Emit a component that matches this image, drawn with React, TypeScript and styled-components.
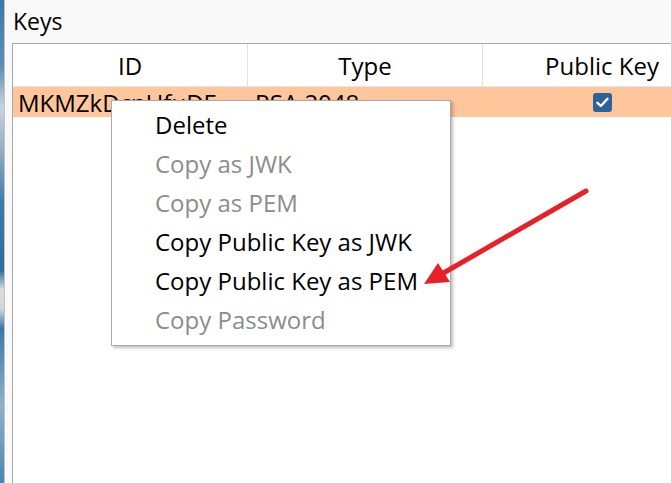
import React from "react";
import styled, { createGlobalStyle } from "styled-components";

const Global = createGlobalStyle`
  html, body { margin: 0; padding: 0; background: #f9f9f9; overflow: hidden; }
  body { font-family: "Open Sans", "Noto Sans", sans-serif; }
`;

const Screen = styled.div`
  position: relative;
  display: flex;
  width: 671px;
  height: 483px;
  overflow: hidden;
`;

const Desktop = styled.div`
  width: 4px;
  flex: none;
  background: linear-gradient(
    180deg,
    #3b78a8 0%,
    #5f8fb5 14%,
    #c9d3dc 22%,
    #9bb3c6 30%,
    #3e7aa8 42%,
    #2f6c9e 56%,
    #d9dde0 60%,
    #cfd6dc 64%,
    #3c77a6 68%,
    #8fb0c9 84%,
    #4b84b0 100%
  );
`;

const WindowEdge = styled.div`
  width: 1px;
  flex: none;
  background: #c4c4c4;
`;

const Window = styled.div`
  flex: 1;
  display: flex;
  flex-direction: column;
  background: #f9f9f9;
  min-width: 0;
`;

const Title = styled.div`
  height: 43px;
  padding-left: 8px;
  font-size: 23px;
  line-height: 42px;
  color: #000;
  box-sizing: border-box;
`;

const Table = styled.div`
  flex: 1;
  margin-left: 7px;
  width: 740px;
  border-top: 1px solid #a8a8a8;
  border-left: 1px solid #a8a8a8;
  background: #fff;
`;

const HeaderRow = styled.div`
  display: grid;
  grid-template-columns: 235px 235px 238px;
  height: 42px;
  border-bottom: 1px solid #e6e6e6;
`;

const HeaderCell = styled.div<{ $last?: boolean }>`
  display: flex;
  align-items: center;
  justify-content: center;
  font-size: 24px;
  color: #000;
  border-right: ${(p) => (p.$last ? "none" : "1px solid #e3e3e3")};
`;

const DataRow = styled.div`
  display: grid;
  grid-template-columns: 235px 235px 238px;
  height: 30px;
  background: #ffc69c;
`;

const Cell = styled.div<{ $center?: boolean; $pad?: number }>`
  display: flex;
  align-items: center;
  justify-content: ${(p) => (p.$center ? "center" : "flex-start")};
  padding-left: ${(p) => p.$pad ?? 0}px;
  font-size: 24px;
  color: #000;
  white-space: nowrap;
  overflow: hidden;
`;

const Check = styled.div`
  width: 19px;
  height: 19px;
  border-radius: 3px;
  background: #2b629b;
  display: flex;
  align-items: center;
  justify-content: center;
`;

const Menu = styled.div`
  position: absolute;
  left: 111px;
  top: 100px;
  width: 338px;
  padding: 4px 0 6px;
  background: #fff;
  border: 1px solid #a9a9a9;
  box-shadow: 2px 2px 3px rgba(0, 0, 0, 0.25);
`;

const MenuItem = styled.div<{ $disabled?: boolean }>`
  height: 39px;
  display: flex;
  align-items: center;
  padding-left: 43px;
  font-size: 24px;
  color: ${(p) => (p.$disabled ? "#8c8c8c" : "#000")};
  white-space: nowrap;
`;

const Arrow = styled.svg`
  position: absolute;
  left: 0;
  top: 0;
  pointer-events: none;
`;

const items: { label: string; disabled?: boolean }[] = [
  { label: "Delete" },
  { label: "Copy as JWK", disabled: true },
  { label: "Copy as PEM", disabled: true },
  { label: "Copy Public Key as JWK" },
  { label: "Copy Public Key as PEM" },
  { label: "Copy Password", disabled: true },
];

export default function App() {
  return (
    <>
      <Global />
      <Screen>
        <Desktop />
        <WindowEdge />
        <Window>
          <Title>Keys</Title>
          <Table>
            <HeaderRow>
              <HeaderCell>ID</HeaderCell>
              <HeaderCell>Type</HeaderCell>
              <HeaderCell $last>Public Key</HeaderCell>
            </HeaderRow>
            <DataRow>
              <Cell $pad={5}>MKMZkDcnUfuDE…</Cell>
              <Cell $pad={7}>RSA 2048</Cell>
              <Cell $center>
                <Check>
                  <svg width="13" height="11" viewBox="0 0 13 11">
                    <path
                      d="M1.5 5.8 L4.8 9 L11.5 1.8"
                      fill="none"
                      stroke="#fff"
                      strokeWidth="2.4"
                      strokeLinecap="round"
                      strokeLinejoin="round"
                    />
                  </svg>
                </Check>
              </Cell>
            </DataRow>
          </Table>
        </Window>
        <Menu>
          {items.map((it) => (
            <MenuItem key={it.label} $disabled={it.disabled}>
              {it.label}
            </MenuItem>
          ))}
        </Menu>
        <Arrow width="671" height="483" viewBox="0 0 671 483">
          <line
            x1="586"
            y1="191"
            x2="440"
            y2="275"
            stroke="#e8202a"
            strokeWidth="5"
            strokeLinecap="round"
          />
          <polygon points="424,284 438,263 450,282" fill="#e8202a" />
        </Arrow>
      </Screen>
    </>
  );
}
